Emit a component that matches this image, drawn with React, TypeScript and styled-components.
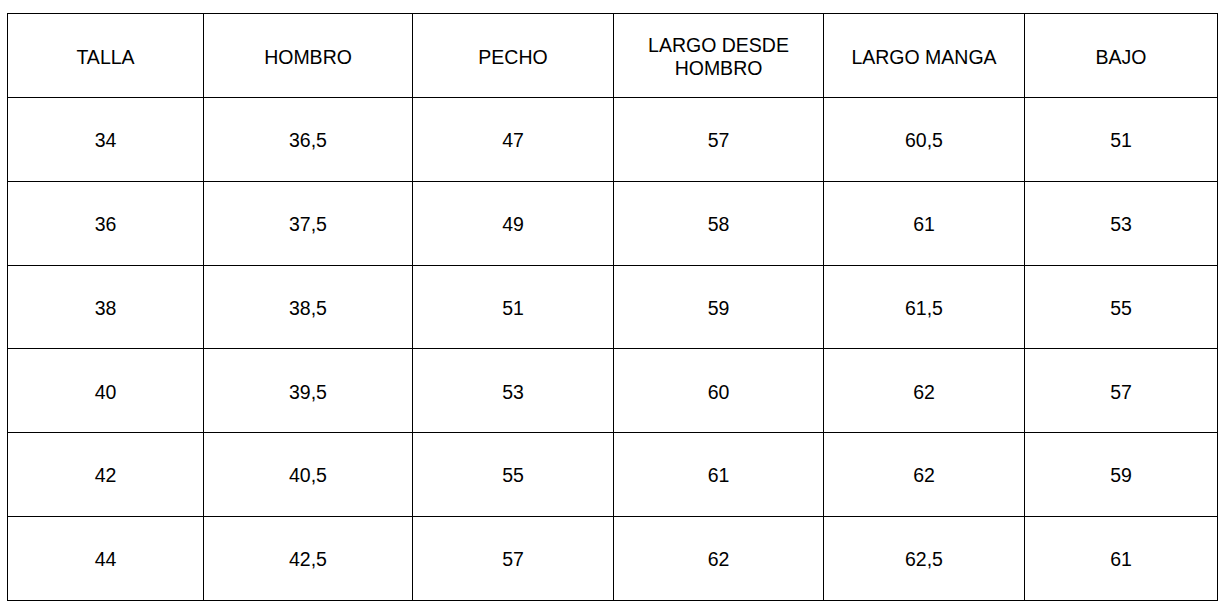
import React from 'react';
import styled, { createGlobalStyle } from 'styled-components';

const GlobalStyle = createGlobalStyle`
  html, body {
    margin: 0;
    padding: 0;
    background: #fff;
  }
  body {
    font-family: "Liberation Sans", Arial, Helvetica, sans-serif;
    color: #000;
  }
`;

const Page = styled.div`
  padding: 13px 11px 13px 7px;
`;

const Table = styled.table`
  width: 1210px;
  border-collapse: collapse;
  table-layout: fixed;
  font-size: 19.5px;
  line-height: 22.5px;
`;

const Row = styled.tr`
  height: 83.85px;
`;

const Cell = styled.td<{ $head?: boolean }>`
  border: 1px solid #000;
  text-align: center;
  vertical-align: middle;
  padding: ${(p) => (p.$head ? '3px 8px 0' : '2px 8px 0')};
  font-weight: normal;
`;

const widths = [196, 209, 201, 210, 201, 193];

const headers = ['TALLA', 'HOMBRO', 'PECHO', 'LARGO DESDE HOMBRO', 'LARGO MANGA', 'BAJO'];

const rows = [
  ['34', '36,5', '47', '57', '60,5', '51'],
  ['36', '37,5', '49', '58', '61', '53'],
  ['38', '38,5', '51', '59', '61,5', '55'],
  ['40', '39,5', '53', '60', '62', '57'],
  ['42', '40,5', '55', '61', '62', '59'],
  ['44', '42,5', '57', '62', '62,5', '61'],
];

const App = () => (
  <>
    <GlobalStyle />
    <Page>
      <Table>
        <colgroup>
          {widths.map((w, i) => (
            <col key={i} style={{ width: w }} />
          ))}
        </colgroup>
        <tbody>
          <Row>
            {headers.map((h) => (
              <Cell key={h} $head>
                {h}
              </Cell>
            ))}
          </Row>
          {rows.map((r, i) => (
            <Row key={i}>
              {r.map((v, j) => (
                <Cell key={j}>{v}</Cell>
              ))}
            </Row>
          ))}
        </tbody>
      </Table>
    </Page>
  </>
);

export default App;
